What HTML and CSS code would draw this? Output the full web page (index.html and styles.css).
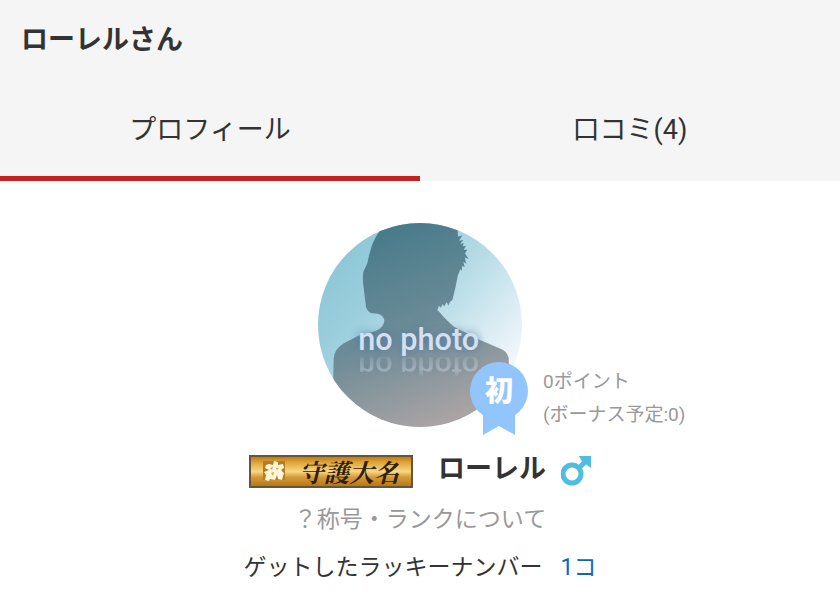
FILE: index.html
```html
<!DOCTYPE html>
<html lang="ja">
<head>
<meta charset="utf-8">
<meta name="viewport" content="width=device-width, initial-scale=1">
<title>ローレルさん</title>
<link rel="stylesheet" href="styles.css">
</head>
<body>
<header class="header">
  <h1 class="title">ローレルさん</h1>
  <nav class="tabs">
    <a class="tab tab-active" href="#profile" aria-current="page">プロフィール</a>
    <a class="tab" href="#reviews">口コミ(4)</a>
  </nav>
</header>
<main class="profile" id="profile">
  <div class="summary">
    <div class="avatar">
      <svg class="photo" viewBox="26 21 612 612" role="img" aria-label="no photo">
        <defs>
          <linearGradient id="sky" x1="0.1" y1="0.1" x2="0.9" y2="0.8">
            <stop offset="0" stop-color="#8bc6d6"/>
            <stop offset="0.3" stop-color="#9dcfdd"/>
            <stop offset="0.55" stop-color="#b9dde7"/>
            <stop offset="1" stop-color="#f6f9fd"/>
          </linearGradient>
          <linearGradient id="person" x1="0.3" y1="0" x2="0.65" y2="1">
            <stop offset="0" stop-color="#467a8a"/>
            <stop offset="0.5" stop-color="#6c8b97"/>
            <stop offset="1" stop-color="#aea5a5"/>
          </linearGradient>
          <linearGradient id="fade" gradientUnits="userSpaceOnUse" x1="0" y1="424" x2="0" y2="480">
            <stop offset="0" stop-color="#fff" stop-opacity="0.15"/>
            <stop offset="0.65" stop-color="#fff" stop-opacity="0.35"/>
            <stop offset="1" stop-color="#fff" stop-opacity="0.05"/>
          </linearGradient>
          <mask id="mirror"><rect x="120" y="424" width="420" height="56" fill="url(#fade)"/></mask>
          <clipPath id="round"><circle cx="332" cy="327" r="306"/></clipPath>
        </defs>
        <g clip-path="url(#round)">
          <rect x="26" y="21" width="612" height="612" fill="url(#sky)"/>
          <path fill="url(#person)" d="M209 21V48Q190 75 182 108Q177 126 174 142L162 167Q159 190 163 215L170 272Q174 288 188 292L205 293Q224 298 225 315Q222 333 207 341Q187 350 147 359L105 381Q75 398 73 428L68 633H605L598 425Q592 404 570 397L514 373L435 333Q407 309 390 288L384 283L389 269L395 275L399 265L405 271L412 258L417 269L422 257L429 253Q439 215 445 180L453 160L458 164V150L466 153L462 137L471 143L466 124L478 130L467 112L474 101L463 101L470 90L460 91L463 81L452 84L462 72L449 74L459 58L446 62L444 21Z"/>
          <text class="photo-text" id="caption" x="328" y="402">no photo</text>
          <g mask="url(#mirror)" aria-hidden="true">
            <use href="#caption" transform="translate(0 818) scale(1 -1)"/>
          </g>
        </g>
      </svg>
      <div class="badge">
        <svg class="ribbon" viewBox="0 0 58 73" aria-hidden="true">
          <circle cx="29" cy="29" r="29"/>
          <path d="M13 48H45V73L29 64L13 73Z"/>
        </svg>
        <span class="badge-text">初</span>
      </div>
    </div>
    <p class="points">0ポイント<br>(ボーナス予定:0)</p>
  </div>
  <div class="identity">
    <span class="rank"><svg class="crest" viewBox="0 0 24 22" aria-hidden="true">
        <path fill="#b77b22" d="M1 1H23V20H1Z"/>
        <path fill="#fff6d8" d="M7 4L11 5L12 1L16 2V5L21 4L22 8L19 10L22 13L20 20L16 19L15 15L13 20L8 19L7 21L3 20L4 15L2 12L7 10L3 8L4 5Z"/>
        <path fill="#d5a44c" d="M8 8L11 7L10 10ZM14 8H17L15 10ZM9 13L12 12L11 16Z"/>
      </svg><span class="rank-text">守護大名</span></span>
    <h2 class="name">ローレル</h2>
    <svg class="gender" viewBox="0 0 30 30" role="img" aria-label="男性">
      <circle cx="11" cy="18" r="9"/>
      <path d="M18 12L25 5"/>
      <path class="arrow" d="M18 0H30V12L26 9L23 7L20 4Z"/>
    </svg>
  </div>
  <a class="help" href="#rank">？称号・ランクについて</a>
  <p class="lucky">ゲットしたラッキーナンバー<a class="count" href="#lucky">1コ</a></p>
</main>
</body>
</html>
```
FILE: styles.css
```css
* { box-sizing: border-box; }
body {
  margin: 0;
  background: #fff;
  color: #333;
  font-family: Roboto, "Noto Sans CJK JP", sans-serif;
}
a { text-decoration: none; }
h1, h2, p { margin: 0; }

.header { background: #f5f5f5; }
.title {
  padding: 20px 21px 16px;
  font-size: 27px;
  line-height: 40px;
  font-weight: 700;
}
.tabs { display: grid; grid-template-columns: 1fr 1fr; }
.tab {
  padding: 34px 0 26px;
  border-bottom: 5px solid transparent;
  color: #333;
  font-size: 27px;
  line-height: 40px;
  text-align: center;
}
.tab-active { border-color: #c7201e; }

.profile {
  display: flex;
  flex-direction: column;
  align-items: center;
  padding: 42px 0 24px;
}
.summary {
  display: grid;
  grid-template-columns: 1fr 204px 1fr;
  align-items: end;
  width: 100%;
}
.avatar { position: relative; grid-column: 2; }
.photo { display: block; width: 100%; }
.photo-text {
  fill: #d3e0ef;
  font-family: Roboto, sans-serif;
  font-size: 92px;
  font-weight: 500;
  text-anchor: middle;
  text-shadow: 0 0 8px #5275a0;
}
.badge {
  position: absolute;
  right: -6px;
  bottom: -8px;
  width: 58px;
}
.ribbon { display: block; width: 100%; fill: #93c5fd; }
.badge-text {
  position: absolute;
  inset: 0 0 auto;
  color: #fff;
  font-size: 28px;
  line-height: 60px;
  font-weight: 900;
  text-align: center;
}
.points {
  margin-bottom: -4px;
  padding-left: 21px;
  color: #999;
  font-size: 19px;
  line-height: 33px;
}

.identity {
  display: flex;
  align-items: center;
  margin-top: 22px;
}
.rank {
  display: flex;
  align-items: center;
  justify-content: space-between;
  width: 164px;
  height: 33px;
  margin-top: 4px;
  padding: 0 12px 0 11px;
  border: 2px solid #65553b;
  background: linear-gradient(#bd7c16, #e0a73c 20%, #f8d682 50%, #d49a38 70%, #b87815);
}
.crest { width: 24px; height: 22px; }
.rank-text {
  color: #302008;
  font-family: "Noto Serif CJK JP", "Noto Sans CJK JP", serif;
  font-size: 25px;
  line-height: 28px;
  font-style: italic;
  font-weight: 700;
}
.name {
  margin: 0 15px 0 25px;
  font-size: 27px;
  line-height: 40px;
}
.gender {
  width: 30px;
  height: 30px;
  margin-top: 4px;
  fill: none;
  stroke: #4fbde0;
  stroke-width: 5;
}
.arrow { fill: #4fbde0; stroke: none; }
.help {
  margin-top: 11px;
  color: #999;
  font-size: 23px;
  line-height: 40px;
}
.lucky {
  margin-top: 8px;
  font-size: 23px;
  line-height: 40px;
}
.count { margin-left: 18px; color: #1267b5; }
```
